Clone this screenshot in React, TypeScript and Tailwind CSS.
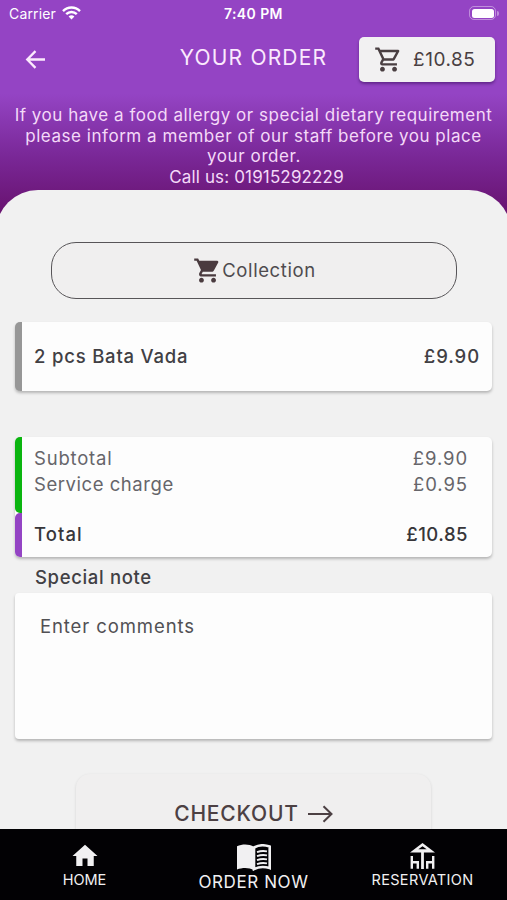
import React from "react";
import { MdHome, MdOutlineShoppingCart, MdShoppingCart } from "react-icons/md";

const notice = [
  { text: "If you have a food allergy or special dietary requirement", spacing: "tracking-[0.52px]" },
  { text: "please inform a member of our staff before you place", spacing: "tracking-[0.54px]" },
  { text: "your order.", spacing: "tracking-[0.6px] pl-[1px]" },
  { text: "Call us: 01915292229", spacing: "tracking-[0.15px] pl-[6px]" },
];

const BookIcon: React.FC = () => (
  <svg className="h-[27px] w-[34px]" viewBox="0 0 34 27" fill="none" stroke="currentColor">
    <path d="M0 2.2C5.5 0 12 0 17 2.8V26.2C12 23.5 5.5 23.5 0 25.6z" fill="currentColor" stroke="none" />
    <path d="M17 3.6c4.500-2.700 10.500-2.800 15.700-1v21.500c-5-1.600-11.200-1.400-15.700 1z" strokeWidth="2.6" />
    <path d="M20 8.2c3.300-1.300 6.500-1.500 10-.8M20 12.2c3.300-1.300 6.500-1.500 10-.8M20 16.2c3.300-1.300 6.500-1.500 10-.8M20 20.2c3.300-1.300 6.500-1.500 10-.8" strokeWidth="1.8" />
  </svg>
);

const TerraceIcon: React.FC = () => (
  <svg className="h-[26px] w-[25px]" viewBox="0 0 25 26" fill="none" stroke="currentColor" strokeWidth="2.4">
    <path d="M0 9.500 12.500 0 25 9.500z M12.500 3.200 8.300 6.300h8.400z" fill="currentColor" fillRule="evenodd" stroke="none" />
    <path d="M12.500 8v18" strokeWidth="2.8" />
    <path d="M1.800 13v12.700M1.800 19.200h6v6.500" />
    <path d="M23.200 13v12.700M23.200 19.200h-6v6.500" />
  </svg>
);

const StatusBar: React.FC = () => (
  <div className="relative flex h-[26px] items-center justify-between pl-[9px] pr-[8px] text-white">
    <div className="flex items-center gap-[6px] text-[14px]">
      <span className="tracking-[0.15px]">Carrier</span>
      <svg className="h-[14px] w-[19px]" viewBox="0 0 19 14" fill="none" stroke="currentColor" strokeWidth="2.4">
        <path d="M1 5.2C5.8.3 13.2.3 18 5.2" />
        <path d="M4.2 8.2c3-3 7.6-3 10.6 0" />
        <path d="M6.6 10.4c1.7-1.6 4.1-1.6 5.8 0L9.5 13.4z" fill="currentColor" stroke="none" />
      </svg>
    </div>
    <span className="absolute left-[224px] whitespace-nowrap text-[14px] font-semibold tracking-[0.4px]">
      7:40 PM
    </span>
    <div className="flex items-center gap-px">
      <div className="h-[14px] w-[27px] rounded-[5px] border border-white/40 p-[1.5px]">
        <div className="h-full w-full rounded-[2.5px] bg-white" />
      </div>
      <div className="h-[5px] w-[2px] rounded-r-full bg-white/40" />
    </div>
  </div>
);

const Header: React.FC = () => (
  <header className="h-[232px] bg-[linear-gradient(180deg,#9444c4_0,#9444c4_94px,#7a2898_155px,#68126f_214px)] text-white">
    <StatusBar />
    <div className="flex h-[68px] items-start justify-between pl-[25px] pr-[12px] pt-[11px]">
      <svg className="mt-[13px] h-[19px] w-[21px]" viewBox="0 0 21 20" fill="none" stroke="#fbeafd" strokeWidth="2.4">
        <path d="M20.5 10H2M10.5 1.2 1.8 10l8.7 8.8" />
      </svg>
      <h1 className="ml-[102px] mt-[7px] whitespace-nowrap text-[21px] leading-[28px] tracking-[1.2px] text-[#fbeafd]">
        YOUR ORDER
      </h1>
      <button className="flex h-[45px] w-[136px] items-center rounded-[5px] bg-[#f2f1f2] pl-[15px] text-[#4a3f42] shadow-[0_2px_3px_rgba(40,0,70,0.45)]">
        <MdOutlineShoppingCart className="h-[29px] w-[29px] shrink-0" />
        <span className="ml-[10px] pt-px text-[19px] tracking-[0.55px]">£10.85</span>
      </button>
    </div>
    <div className="pt-[11px] text-center text-[17px] leading-[20.7px] text-[#f4d9f8]">
      {notice.map((line) => (
        <p key={line.text} className={`whitespace-nowrap ${line.spacing}`}>
          {line.text}
        </p>
      ))}
    </div>
  </header>
);

const OrderSummary: React.FC = () => (
  <section className="mt-[46px] rounded-[5px] bg-[#fdfdfd] text-[18.5px] shadow-[0_2px_3px_rgba(0,0,0,0.25)]">
    <div className="h-[76px] rounded-l-[5px] border-l-[7px] border-[#0bb510] pl-[12px] pr-[24px] pt-[8px] leading-[26px] text-[#66656a]">
      <div className="flex justify-between">
        <span className="tracking-[0.8px]">Subtotal</span>
        <span className="tracking-[0.9px]">£9.90</span>
      </div>
      <div className="flex justify-between">
        <span className="tracking-[0.55px]">Service charge</span>
        <span className="tracking-[0.9px]">£0.95</span>
      </div>
    </div>
    <div className="flex h-[44px] justify-between rounded-l-[5px] border-l-[7px] border-[#9444c4] pl-[12px] pr-[24px] pt-[8px] leading-[26px] font-medium text-[#37363a]">
      <span className="tracking-[1.1px]">Total</span>
      <span className="tracking-[0.5px]">£10.85</span>
    </div>
  </section>
);

const NavBar: React.FC = () => (
  <nav className="flex h-[71px] shrink-0 bg-[#020104] text-[#f1f0f2]">
    <div className="flex w-[169px] flex-col items-center pt-[12px]">
      <MdHome className="h-[30px] w-[30px]" />
      <span className="text-[14.5px] leading-[18px]">HOME</span>
    </div>
    <div className="flex w-[169px] flex-col items-center pt-[15px]">
      <BookIcon />
      <span className="mt-[2px] whitespace-nowrap text-[17px] leading-[18px] tracking-[0.6px]">
        ORDER NOW
      </span>
    </div>
    <div className="flex w-[169px] flex-col items-center pt-[14px]">
      <TerraceIcon />
      <span className="mt-[2px] text-[14.5px] leading-[18px] tracking-[0.35px]">
        RESERVATION
      </span>
    </div>
  </nav>
);

export default function App() {
  return (
    <div className="flex h-[900px] w-[507px] flex-col overflow-hidden bg-[#f1f1f1] font-['Inter','Liberation_Sans',sans-serif]">
      <div className="min-h-0 flex-1 overflow-hidden">
        <Header />

        <main className="relative -mx-[4px] -mt-[42px] rounded-t-[42px] bg-[#f1f1f1] px-[19px] pt-[52px]">
          <button className="mx-auto flex h-[57px] w-[406px] items-center justify-center rounded-[25px] border-[1.5px] border-[#575558] bg-[#f0efef] pl-[2px] text-[18.5px] text-[#4e4b4e]">
            <MdShoppingCart className="h-[29px] w-[29px] text-[#4a3b3f]" />
            <span className="tracking-[0.6px]">Collection</span>
          </button>

          <section className="mt-[23px] flex h-[69px] items-center justify-between rounded-[5px] border-l-[7px] border-[#979797] bg-[#fdfdfd] pl-[12px] pr-[12px] text-[18.5px] font-medium text-[#414044] shadow-[0_2px_3px_rgba(0,0,0,0.25)]">
            <span className="tracking-[0.8px]">2 pcs Bata Vada</span>
            <span className="tracking-[0.9px]">£9.90</span>
          </section>

          <OrderSummary />

          <h2 className="ml-[20px] mt-[7px] text-[18.5px] font-medium leading-[26px] tracking-[0.65px] text-[#414044]">
            Special note
          </h2>
          <div className="mt-[3px] h-[146px] rounded-[4px] bg-[#fdfdfd] pl-[25px] pt-[20px] text-[18.5px] leading-[26px] tracking-[0.9px] text-[#515054] shadow-[0_2px_3px_rgba(0,0,0,0.25)]">
            Enter comments
          </div>

          <button className="mx-auto mt-[35px] flex h-[80px] w-[355px] items-center justify-center gap-[9px] rounded-[14px] bg-[#f0efef] text-[21px] font-medium text-[#4c4043] shadow-[0_1px_3px_rgba(0,0,0,0.13)]">
            <span className="tracking-[0.8px]">CHECKOUT</span>
            <svg className="h-[18px] w-[25px]" viewBox="0 0 25 18" fill="none" stroke="currentColor" strokeWidth="2">
              <path d="M0 9h23M15.5 1.2 23.5 9l-8 7.8" />
            </svg>
          </button>
        </main>
      </div>

      <NavBar />
    </div>
  );
}
